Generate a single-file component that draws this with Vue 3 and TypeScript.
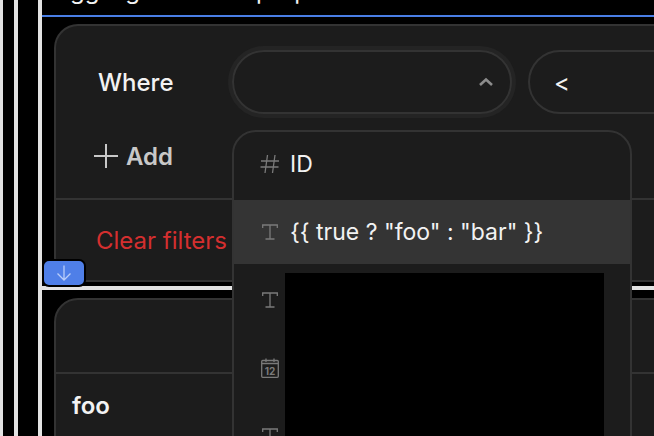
<script setup lang="ts">
const items = [
  { icon: 'hash', label: 'ID' },
  { icon: 'text', label: '{{ true ? "foo" : "bar" }}', active: true },
]
</script>

<template>
  <div class="stripe one">
    <div class="stripe two">
      <div class="stripe three">
        <p class="clipped"><span>toggling mode for purposes of the modal to be tested in the sandbox</span></p>
        <div class="blue-line"></div>

        <section class="panel filters">
          <div class="row where">
            <span class="where-label">Where</span>
            <div class="select focused">
              <svg class="chev" width="16" height="16" viewBox="0 0 16 16">
                <path d="M2 11 8 5.500l6 5.500" fill="none" stroke="#8c8c8c" stroke-width="2.600" />
              </svg>
            </div>
            <div class="select op">&lt;</div>
          </div>
          <div class="row add">
            <svg width="24" height="24" viewBox="0 0 24 24">
              <path d="M12 0v24M0 12h24" stroke="#c8c8c8" stroke-width="2" fill="none" />
            </svg>
            <span>Add</span>
          </div>
          <div class="row clear">Clear filters</div>
        </section>

        <div class="white-line">
          <button class="scroll-btn">
            <svg width="18" height="18" viewBox="0 0 18 18">
              <path d="M9 1.500v14.500M2.500 9.500 9 16l6.500-6.500" fill="none" stroke="#b9cdf9" stroke-width="1.300" />
            </svg>
          </button>
        </div>

        <section class="panel table">
          <div class="table-head"></div>
          <div class="table-row">foo</div>
        </section>

        <div class="dropdown">
          <div v-for="item in items" :key="item.label" class="option" :class="{ active: item.active }">
            <span class="opt-icon">
              <svg v-if="item.icon === 'hash'" width="20" height="20" viewBox="0 0 20 20">
                <path d="M7.500 1 5 19M15 1l-2.500 18M1 7h18M0.500 13h18" stroke="#7a7a7a" stroke-width="1.300" fill="none" />
              </svg>
              <svg v-else width="16" height="16" viewBox="0 0 16 16">
                <path d="M0.700 4V1h14.600v3M8 1v14M3.500 15h9" stroke="#7a7a7a" stroke-width="1.300" fill="none" />
              </svg>
            </span>
            <span>{{ item.label }}</span>
          </div>
          <div class="masked">
            <div class="icon-col">
              <svg width="16" height="16" viewBox="0 0 16 16">
                <path d="M0.700 4V1h14.600v3M8 1v14M3.500 15h9" stroke="#7a7a7a" stroke-width="1.300" fill="none" />
              </svg>
              <svg width="18" height="20" viewBox="0 0 18 20">
                <rect x="0.700" y="2.500" width="16.600" height="16.800" rx="1" stroke="#7a7a7a" stroke-width="1.300" fill="none" />
                <path d="M0.700 5.500h16.600M5 0.500v3.500M13 0.500v3.500" stroke="#7a7a7a" stroke-width="1.300" fill="none" />
                <text x="9" y="16.500" class="cal-num">12</text>
              </svg>
              <svg width="16" height="16" viewBox="0 0 16 16">
                <path d="M0.700 4V1h14.600v3M8 1v14M3.500 15h9" stroke="#7a7a7a" stroke-width="1.300" fill="none" />
              </svg>
            </div>
            <div class="blackout"></div>
          </div>
        </div>
      </div>
    </div>
  </div>
</template>

<style>
html, body {
  margin: 0;
  background: #000;
  overflow: hidden;
}
</style>

<style scoped>
.stripe {
  box-sizing: border-box;
  border-left: 4px solid #e3e3e3;
  height: 436px;
  background: #000;
}
.one {
  width: 654px;
  padding-left: 11px;
  border-left-width: 3px;
  overflow: hidden;
}
.two {
  padding-left: 20px;
}
.three {
  position: relative;
  font-family: Inter, "Liberation Sans", sans-serif;
  color: #f2f2f2;
}
.clipped {
  margin: 0;
  height: 15px;
  padding-left: 6px;
  font-size: 24px;
  line-height: 24px;
  white-space: nowrap;
  overflow: hidden;
}
.clipped span {
  display: block;
  margin-top: -21px;
}
.blue-line {
  height: 2px;
  background: #4a7fe6;
  margin-bottom: 7px;
}
.panel {
  box-sizing: border-box;
  margin-left: 12px;
  width: 660px;
  background: #1c1c1c;
  border: 2px solid #333;
  border-radius: 24px 0 0 0;
}
.filters {
  height: 258px;
  border-bottom-left-radius: 24px;
  border-right: none;
}
.row {
  display: flex;
  align-items: center;
}
.where {
  height: 112px;
  padding-left: 42px;
  gap: 16px;
}
.where-label {
  width: 118px;
  flex-shrink: 0;
  font-size: 24px;
  font-weight: 500;
}
.select {
  box-sizing: border-box;
  width: 280px;
  height: 64px;
  border: 2px solid #333;
  border-radius: 32px;
  display: flex;
  align-items: center;
  justify-content: flex-end;
  padding-right: 16px;
  flex-shrink: 0;
}
.focused {
  box-shadow: 0 0 0 4px #242424;
}
.op {
  justify-content: flex-start;
  padding-left: 24px;
  font-size: 24px;
}
.add {
  box-sizing: border-box;
  height: 60px;
  padding-left: 38px;
  padding-bottom: 24px;
  gap: 8px;
  font-size: 24px;
  font-weight: 600;
  color: #c8c8c8;
}
.clear {
  border-top: 2px solid #333;
  padding-left: 40px;
  height: 80px;
  font-size: 24px;
  color: #d42f2f;
}
.white-line {
  position: relative;
  height: 4px;
  background: #e3e3e3;
  margin-top: 4px;
  margin-bottom: 8px;
}
.scroll-btn {
  position: absolute;
  left: 0;
  bottom: 3px;
  box-sizing: content-box;
  width: 40px;
  height: 24px;
  padding: 0;
  border: 2px solid #000;
  border-radius: 7px;
  background: #4f7fe8;
  display: flex;
  align-items: center;
  justify-content: center;
}
.table {
  height: 200px;
}
.table-head {
  box-sizing: border-box;
  height: 74px;
  border-bottom: 2px solid #333;
}
.table-row {
  padding: 17px 16px;
  font-size: 24px;
  font-weight: 600;
}
.dropdown {
  position: absolute;
  left: 190px;
  top: 130px;
  box-sizing: border-box;
  width: 400px;
  height: 330px;
  background: #1c1c1c;
  border: 2px solid #333;
  border-radius: 24px 24px 0 0;
}
.option {
  box-sizing: border-box;
  display: flex;
  align-items: center;
  height: 68px;
  padding-bottom: 4px;
  font-size: 23px;
  padding-left: 26px;
  gap: 10px;
}
.option.active {
  height: 64px;
  padding-bottom: 0;
  background: #343434;
}
.opt-icon {
  width: 20px;
  display: flex;
  justify-content: center;
}
.masked {
  display: flex;
  padding: 9px 0 0 26px;
  gap: 5px;
}
.icon-col {
  width: 20px;
  display: flex;
  flex-direction: column;
  align-items: center;
  gap: 50px;
  padding-top: 19px;
}
.blackout {
  width: 319px;
  height: 200px;
  background: #000;
}
.cal-num {
  font-size: 10px;
  font-weight: 700;
  fill: #7a7a7a;
  text-anchor: middle;
}
</style>
